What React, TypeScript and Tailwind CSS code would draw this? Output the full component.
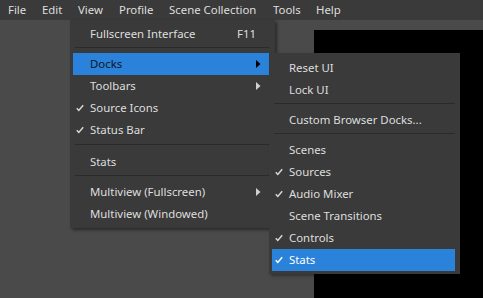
import React from "react";

type Item =
  | { kind: "sep"; h?: number }
  | {
      kind: "item";
      label: string;
      checked?: boolean;
      sub?: boolean;
      shortcut?: string;
      active?: boolean;
      darkText?: boolean;
    };

const viewItems: Item[] = [
  { kind: "item", label: "Fullscreen Interface", shortcut: "F11" },
  { kind: "sep" },
  { kind: "item", label: "Docks", sub: true, active: true, darkText: true },
  { kind: "item", label: "Toolbars", sub: true },
  { kind: "item", label: "Source Icons", checked: true },
  { kind: "item", label: "Status Bar", checked: true },
  { kind: "sep", h: 10 },
  { kind: "item", label: "Stats" },
  { kind: "sep" },
  { kind: "item", label: "Multiview (Fullscreen)", sub: true },
  { kind: "item", label: "Multiview (Windowed)" },
];

const dockItems: Item[] = [
  { kind: "item", label: "Reset UI" },
  { kind: "item", label: "Lock UI" },
  { kind: "sep" },
  { kind: "item", label: "Custom Browser Docks..." },
  { kind: "sep" },
  { kind: "item", label: "Scenes" },
  { kind: "item", label: "Sources", checked: true },
  { kind: "item", label: "Audio Mixer", checked: true },
  { kind: "item", label: "Scene Transitions" },
  { kind: "item", label: "Controls", checked: true },
  { kind: "item", label: "Stats", checked: true, active: true },
];

const Check = ({ color }: { color: string }) => (
  <svg width="8" height="8" viewBox="0 0 8 8" className="absolute left-[3px] top-[7px]">
    <path d="M0.8 4.2 L2.8 6.4 L7.2 1.2" stroke={color} strokeWidth="1.5" fill="none" />
  </svg>
);

const Arrow = ({ color }: { color: string }) => (
  <svg width="5" height="8" viewBox="0 0 5 8" className="absolute right-[8px] top-[7px]">
    <path d="M0 0 L4.5 4 L0 8 Z" fill={color} />
  </svg>
);

const MenuList = ({ items }: { items: Item[] }) => (
  <div className="flex flex-col">
    {items.map((it, i) => {
      if (it.kind === "sep") {
        return (
          <div key={i} className={it.h === 10 ? "h-[10px] pl-[2px] pt-[3px]" : "h-[8px] pl-[2px] pt-[2px]"}>
            <div className="h-px bg-[#2a2a2a]" />
          </div>
        );
      }
      const fg = it.darkText ? "#10151c" : it.active ? "#ffffff" : "#dedede";
      return (
        <div
          key={i}
          className={`relative flex h-[22px] items-center pl-[17px] pr-[13px] ${
            it.active ? "bg-[#2a82da]" : ""
          }`}
          style={{ color: fg }}
        >
          {it.checked && <Check color={it.active ? "#ffffff" : "#d8d8d8"} />}
          <span className="flex-1 whitespace-nowrap">{it.label}</span>
          {it.shortcut && <span>{it.shortcut}</span>}
          {it.sub && <Arrow color={it.darkText ? "#000000" : "#d0d0d0"} />}
        </div>
      );
    })}
  </div>
);

const menus = [
  { label: "File", w: "w-[34px]" },
  { label: "Edit", w: "w-[36px]" },
  { label: "View", w: "w-[41px]" },
  { label: "Profile", w: "w-[50px]" },
  { label: "Scene Collection", w: "w-[104px]" },
  { label: "Tools", w: "w-[43px]" },
  { label: "Help", w: "w-[40px]" },
];

export default function App() {
  return (
    <div
      className="relative flex h-[298px] w-[483px] flex-col overflow-hidden bg-[#4a4a4a] text-[11.4px] text-[#dedede]"
      style={{ fontFamily: '"Noto Sans", "Open Sans", sans-serif' }}
    >
      {/* menu bar */}
      <div className="flex h-[20px] items-center bg-[#3a3a3a]">
        {menus.map((m) => (
          <div key={m.label} className={`${m.w} pl-[8px] leading-[20px]`}>
            {m.label}
          </div>
        ))}
      </div>

      {/* preview area */}
      <div className="flex flex-1 pl-[314px] pt-[10px]">
        <div className="flex-1 bg-black" />
      </div>

      {/* View menu */}
      <div className="absolute left-[70px] top-[20px] w-[205px] bg-[#3a3a3a] pb-[3px] pl-[3px] pr-[6px] pt-[3px] shadow-[2px_2px_3px_rgba(0,0,0,0.45)]">
        <MenuList items={viewItems} />
      </div>

      {/* Docks submenu */}
      <div className="absolute left-[269px] top-[53px] w-[191px] bg-[#3a3a3a] pb-[3px] pl-[3px] pr-[5px] pt-[4px] shadow-[2px_2px_3px_rgba(0,0,0,0.35)]">
        <MenuList items={dockItems} />
      </div>
    </div>
  );
}
